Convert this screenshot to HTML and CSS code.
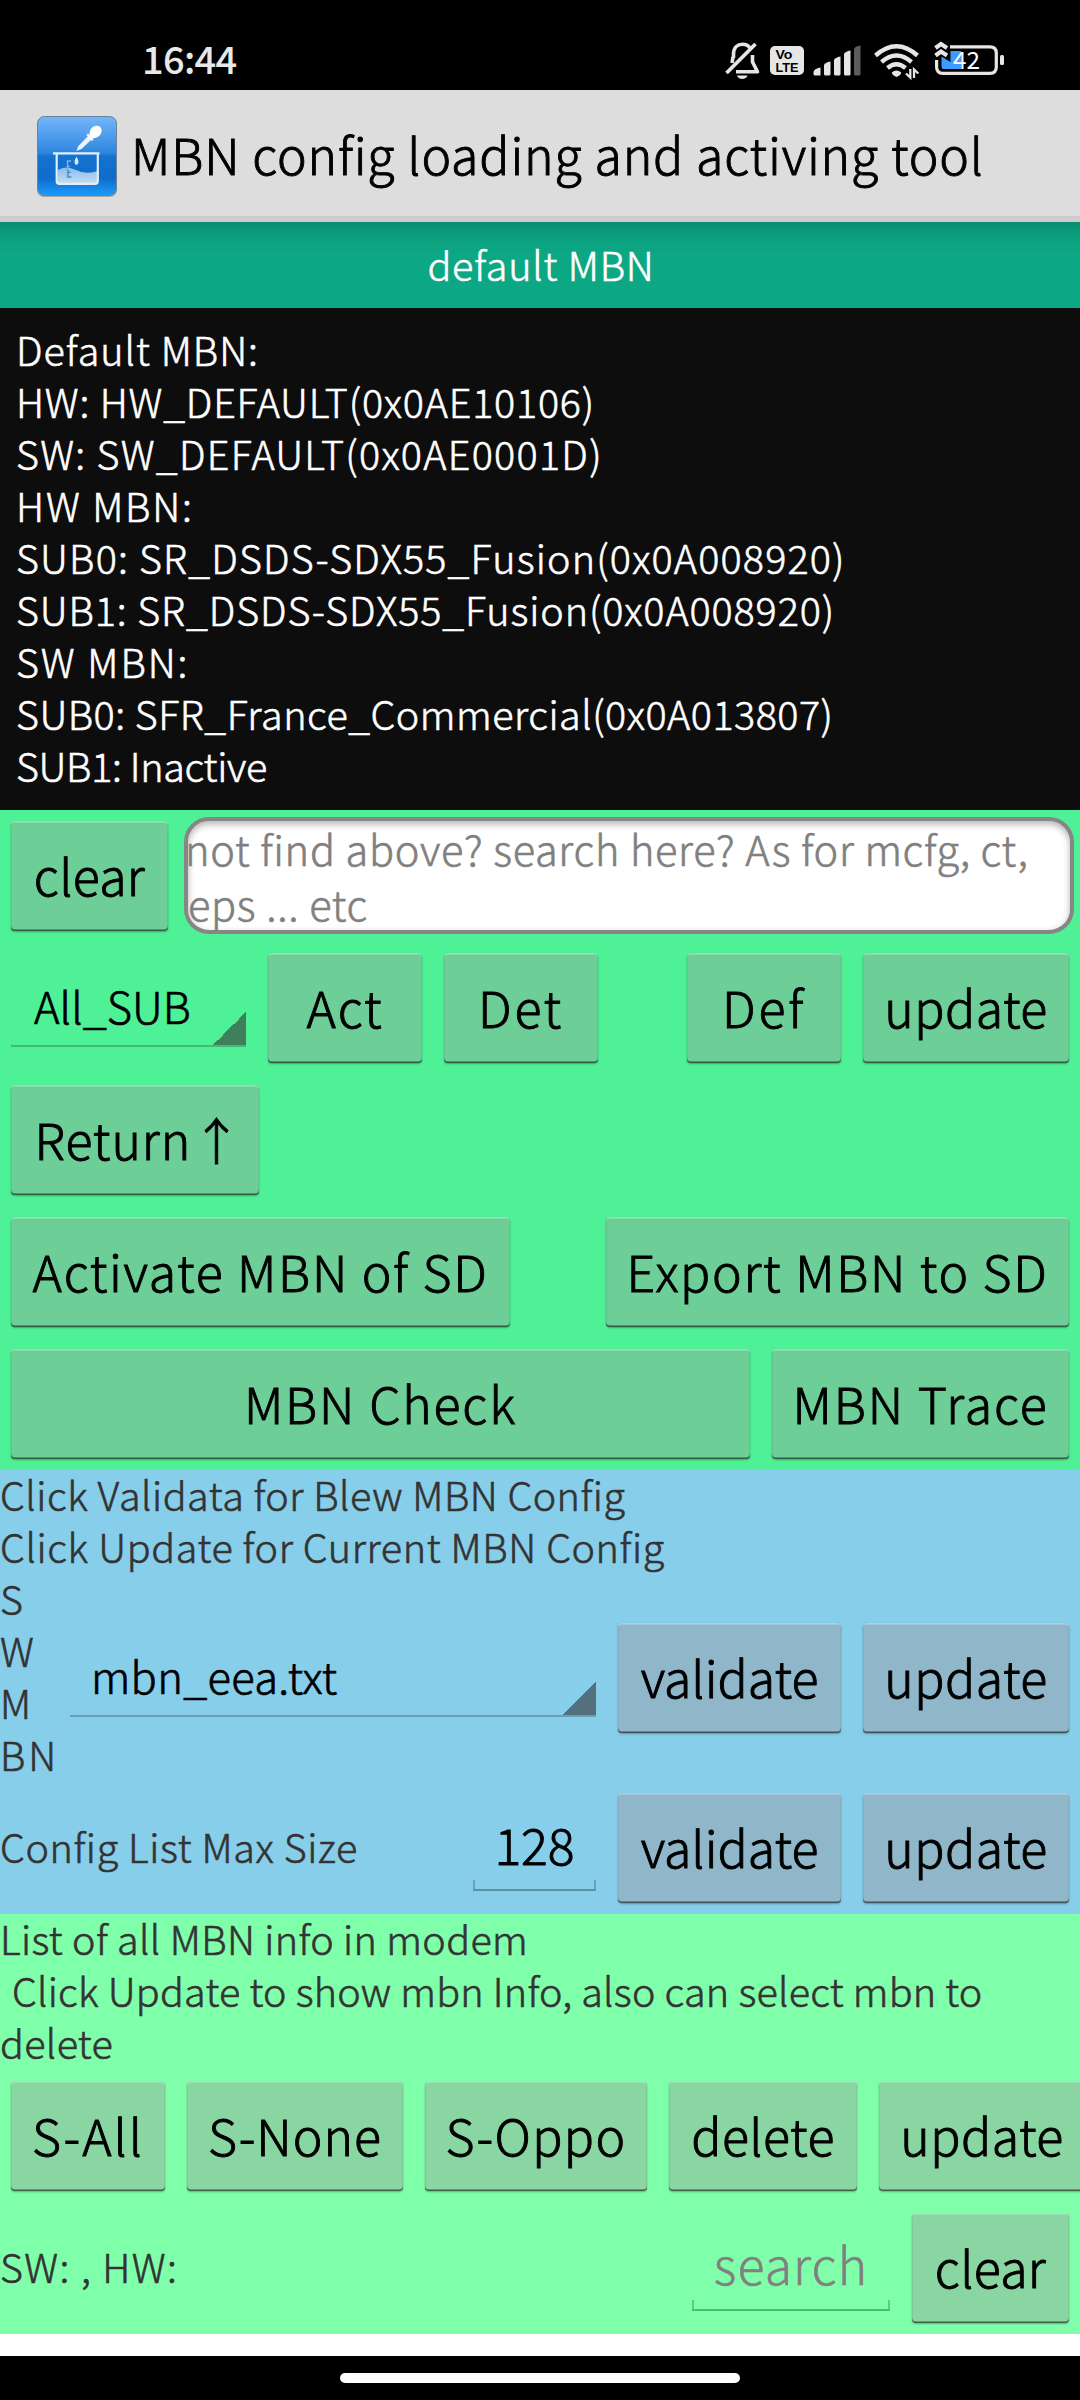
FILE: index.html
```html
<!DOCTYPE html>
<html lang="en">
<head>
<meta charset="utf-8">
<title>MBN config loading and activing tool</title>
<link rel="stylesheet" href="styles.css">
</head>
<body>
<div class="status">
  <span class="time">16:44</span>
  <svg class="status-icons" width="320" height="60" viewBox="0 0 320 60">
    <g fill="none" stroke="#e6e6e6" stroke-width="3.6" stroke-linejoin="round">
      <path d="M33.500 28V24.500C33.500 17 38 14.300 42.500 14.300C46 14.300 48.500 15.800 50 18"/>
      <path d="M52.500 25V32L57.500 41.700H36"/>
      <path d="M33 27L32 33"/>
      <path d="M26.500 43L55.500 14" stroke-width="3.800"/>
    </g>
    <path d="M37 45.500H47.500C46.500 50 38 50 37 45.500Z" fill="#e6e6e6"/>
    <rect x="70" y="16" width="34" height="29" rx="5" fill="#e6e6e6"/>
    <text class="volte"><tspan x="75.500" y="28.500" textLength="17" lengthAdjust="spacingAndGlyphs">Vo</tspan><tspan x="75.500" y="41.500" textLength="23" lengthAdjust="spacingAndGlyphs">LTE</tspan></text>
    <g fill="#e6e6e6">
      <path d="M113.500 42Q114 38.500 120.500 37.500V45.500H115Q113.500 45.500 113.500 44Z"/>
      <path d="M124 35Q125 32.500 130.500 31.500V44Q130.500 45.500 129 45.500H125.500Q124 45.500 124 44Z"/>
      <path d="M134 30Q135 27.500 140.500 26.500V44Q140.500 45.500 139 45.500H135.500Q134 45.500 134 44Z"/>
      <path d="M144 24Q145 21.500 150.500 20.500V44Q150.500 45.500 149 45.500H145.500Q144 45.500 144 44Z"/>
      <path d="M154 19Q155 16 160.500 15.500V44Q160.500 45.500 159 45.500H155.500Q154 45.500 154 44Z" fill="#5c5c5c"/>
    </g>
    <g fill="none" stroke="#e6e6e6" stroke-width="4.400">
      <path d="M175.500 25.500Q196.500 7 217.500 25.500"/>
      <path d="M181.500 32Q196.500 19 211.500 32"/>
      <path d="M187.500 38Q196.500 30.500 205.500 38"/>
    </g>
    <path d="M191.800 42.500Q196.500 38.500 201.300 42.500Q201 45 196.500 47Q192 45 191.800 42.500Z" fill="#e6e6e6"/>
    <path d="M210.300 39V47.500L206 43.500M214 48V39.500L218.300 43.500" fill="none" stroke="#e6e6e6" stroke-width="2.300"/>
    <path d="M250 16.800H290C294 16.800 296.300 19 296.300 23V37C296.300 41 294 43.300 290 43.300H243C239 43.300 236.600 41 236.600 37V30" fill="none" stroke="#e6e6e6" stroke-width="3.200"/>
    <rect x="300" y="25" width="4" height="10" rx="1.500" fill="#e6e6e6"/>
    <path d="M250.500 21H261V39H243.500Q241.500 39 241.500 36.500V26.500L250.500 32Z" fill="#3d9bff"/>
    <path d="M235.500 18L241 14L247 18M235.500 25.500L241 21.500L247 25.500" fill="none" stroke="#e6e6e6" stroke-width="4.200"/>
    <text x="253" y="39" class="battery" textLength="27" lengthAdjust="spacingAndGlyphs">42</text>
  </svg>
</div>

<header class="bar">
  <svg class="app-icon" width="100" height="100" viewBox="0 0 100 100">
    <defs>
      <linearGradient id="sky" x1="0" y1="0" x2="0" y2="1">
        <stop offset="0" stop-color="#74b6fb"/><stop offset=".46" stop-color="#2f86de"/><stop offset=".5" stop-color="#1672cf"/><stop offset=".78" stop-color="#0f6ccb"/><stop offset="1" stop-color="#1d9cfb"/>
      </linearGradient>
      <linearGradient id="water" x1="0" y1="0" x2="0" y2="1">
        <stop offset="0" stop-color="#8dbbe6"/><stop offset="1" stop-color="#c3ddf3"/>
      </linearGradient>
    </defs>
    <rect x="7" y="12.500" width="80" height="79.500" rx="7" fill="#000" opacity=".25"/>
    <rect x="7.500" y="11.500" width="79" height="79" rx="7" fill="url(#sky)" stroke="#6b8299"/>
    <path d="M28 65Q36 60 46 65T68 66V76Q68 78.500 65 78.500H30Q27.500 78.500 27.500 76Z" fill="url(#water)"/>
    <path d="M23 48.300H69.500M26.700 48.500V76Q26.700 78.800 29.500 78.800H65Q67.800 78.800 67.800 76V48.500" fill="none" stroke="#e2eefa" stroke-width="2.200"/>
    <path d="M41 56H37.500V72H41M37.500 61.500H40M37.500 66.500H40" fill="none" stroke="#7db3e6" stroke-width="1.400"/>
    <path d="M38 65V72H41.500M38 67.500H41" fill="none" stroke="#3f86cc" stroke-width="1.200"/>
    <path d="M46.500 51.500Q50.500 58.500 46.500 60Q42.500 58.500 46.500 51.500Z" fill="#d5e7f8"/>
    <path d="M46.500 46L48 41.500L58 31L61.500 34.500L51.500 44Z" fill="#eaf3fc"/>
    <path d="M58 28.500L63.500 34.500L62 36L56.500 30Z" fill="#fff"/>
    <path d="M59.500 30.500Q59 22 66 20.700Q71.500 20.500 71.700 26Q71 32.500 62.500 33.500Z" fill="#fff"/>
  </svg>
  <h1 class="title">MBN config loading and activing tool</h1>
</header>

<div class="tab"><span class="ls08">default MBN</span></div>

<section class="log">
  <p class="ls11">Default MBN:</p>
  <p class="ls08">HW: HW_DEFAULT(0x0AE10106)</p>
  <p class="ls13">SW: SW_DEFAULT(0x0AE0001D)</p>
  <p class="ls19">HW MBN:</p>
  <p class="ls12">SUB0: SR_DSDS-SDX55_Fusion(0x0A008920)</p>
  <p class="ls09">SUB1: SR_DSDS-SDX55_Fusion(0x0A008920)</p>
  <p class="ls20">SW MBN:</p>
  <p class="ls05">SUB0: SFR_France_Commercial(0x0A013807)</p>
  <p class="lsm03">SUB1: Inactive</p>
</section>

<section class="panel green">
  <div class="row">
    <button class="btn w157 ls03">clear</button>
    <div class="search-box">not find above? search here? As for mcfg, ct,<br>eps ... etc</div>
  </div>
  <div class="row">
    <div class="spinner sub">All_SUB</div>
    <button class="btn w154 ls20">Act</button>
    <button class="btn w154 ls28">Det</button>
    <button class="btn w154 ls28 push">Def</button>
    <button class="btn w206 ls05">update</button>
  </div>
  <div class="row">
    <button class="btn w248 ls11">Return<span class="arrow">↑</span></button>
  </div>
  <div class="row">
    <button class="btn w499 ls17">Activate MBN of SD</button>
    <button class="btn w463 ls17 push">Export MBN to SD</button>
  </div>
  <div class="row">
    <button class="btn grow ls19">MBN Check</button>
    <button class="btn w297 ls19">MBN Trace</button>
  </div>
</section>

<section class="panel blue">
  <div class="text">
    <p class="ls05">Click Validata for Blew MBN Config</p>
    <p class="ls06">Click Update for Current MBN Config</p>
  </div>
  <div class="row tall">
    <div class="text sw"><p>S</p><p>W</p><p>M</p><p class="ls28">BN</p></div>
    <div class="spinner file">mbn_eea.txt</div>
    <button class="btn w223">validate</button>
    <button class="btn w206 ls05">update</button>
  </div>
  <div class="row">
    <div class="text"><p class="ls06">Config List Max Size</p></div>
    <div class="field size push">128</div>
    <button class="btn w223">validate</button>
    <button class="btn w206 ls05">update</button>
  </div>
</section>

<section class="panel mint">
  <div class="text">
    <p class="ls03">List of all MBN info in modem</p>
    <p class="ls02 indent">Click Update to show mbn Info, also can select mbn to</p>
    <p class="ls03">delete</p>
  </div>
  <div class="row">
    <button class="btn w154 ls20">S-All</button>
    <button class="btn w216 ls11">S-None</button>
    <button class="btn w222 ls14">S-Oppo</button>
    <button class="btn w188 ls05">delete</button>
    <button class="btn w206 ls05">update</button>
  </div>
  <div class="row">
    <div class="text"><p class="ls14">SW: , HW:</p></div>
    <div class="field find push">search</div>
    <button class="btn w157 ls03">clear</button>
  </div>
</section>

<footer class="nav"><div class="pill"></div></footer>
</body>
</html>
```
FILE: styles.css
```css
* { box-sizing: border-box; }
body {
  margin: 0;
  width: 1080px;
  height: 2400px;
  overflow: hidden;
  display: flex;
  flex-direction: column;
  background: #fff;
  font-family: "Noto Sans CJK SC", sans-serif;
  font-weight: 300;
  font-size: 39.5px;
  line-height: 52px;
  color: #000;
  white-space: nowrap;
}
p, h1, .tab { margin: 0; font-weight: 300; -webkit-text-stroke: .6px currentColor; }

.status {
  height: 90px;
  background: #000;
  color: #e8e8e8;
  display: flex;
  padding: 30px 60px 0 142px;
  justify-content: space-between;
}
.time { font: 500 38px/56px "Noto Sans CJK SC", sans-serif; letter-spacing: -.7px; }
.volte { font: 700 12.5px "Liberation Sans", sans-serif; fill: #000; }
.battery { font: 400 24px "Noto Sans CJK SC", sans-serif; fill: #fff; }

.bar {
  height: 132px;
  background: #ddd;
  border-bottom: 6px solid #ccc;
  display: flex;
  align-items: center;
  padding-left: 30px;
}
.app-icon { margin-top: 4px; }
.title { font-size: 50px; letter-spacing: .84px; padding-left: 1px; -webkit-text-stroke-width: .9px; }

.tab {
  height: 86px;
  padding: 0 0 3px 2px;
  display: flex;
  align-items: center;
  justify-content: center;
  color: #fff;
  background: linear-gradient(#0b8c70, #0c9a7b 10px, #0ca381 20px, #0ca784 32px);
}
.log {
  height: 502px;
  padding: 15px 16px 0;
  background: #0d0d0d;
  color: #fff;
}

.panel { display: flex; flex-direction: column; }
.green { background: #4ff196; --btn: #6dce98; }
.blue { background: #87ceeb; --btn: #8fb7c9; }
.mint { background: #80ffaa; --btn: #8ad6a2; }
.text { margin: -2px 0 2px; color: #333; }
.indent { padding-left: 12px; }

.row {
  height: 132px;
  flex: none;
  display: flex;
  align-items: center;
  padding-right: 11px;
}
.tall { height: 208px; }
.push { margin-left: auto; }

.btn {
  flex: none;
  height: 110px;
  margin: 0 0 0 22px;
  padding: 0 0 5px;
  border: 0;
  border-radius: 4px;
  background: var(--btn);
  box-shadow: inset 0 1.500px 0 rgba(255,255,255,.35), inset 0 -1.500px 0 rgba(0,0,0,.55), inset 1px 0 0 rgba(0,0,0,.06), inset -1px 0 0 rgba(0,0,0,.06), 0 1px 2px rgba(0,0,0,.3);
  font: 300 50px/72px "Noto Sans CJK SC", sans-serif;
  color: #000;
  text-align: center;
  -webkit-text-stroke: .9px #000;
}
.btn.push { margin-left: auto; }
.btn:first-child, .spinner:first-child { margin-left: 11px; }
.grow { flex: 1; }
.w154 { width: 154px; } .w157 { width: 157px; } .w188 { width: 188px; }
.w206 { width: 206px; } .w216 { width: 216px; } .w222 { width: 222px; }
.w223 { width: 223px; } .w248 { width: 248px; } .w297 { width: 297px; }
.w463 { width: 463px; } .w499 { width: 499px; }
.arrow { display: inline-block; width: 50px; margin: 0 -6px 0 0; }

.search-box {
  flex: none;
  width: 890px;
  height: 117px;
  margin: -1px 0 0 16px;
  border: 4px solid #868686;
  border-radius: 25px;
  background: #fff;
  box-shadow: inset 0 3px 7px rgba(0,0,0,.3);
  color: #808080;
  font-size: 41.5px;
  line-height: 55px;
  letter-spacing: .7px;
  -webkit-text-stroke: .6px #808080;
}
/* the hint starts over the box's left edge */
.search-box { padding: 0; text-indent: -3px; }
.search-box::first-line { line-height: 53px; }

.spinner {
  height: 78px;
  border-bottom: 2px solid rgba(61,127,92,.5);
  padding-left: 23px;
  font-size: 43.5px;
  line-height: 73px;
  -webkit-text-stroke: .7px #000;
  background: linear-gradient(135deg, transparent 50%, #407f5b 50%) right bottom / 33px 33px no-repeat;
}
.sub { width: 235px; }
.file {
  width: 526px;
  letter-spacing: .3px;
  padding-left: 21px;
  border-color: rgba(84,112,125,.5);
  background-image: linear-gradient(135deg, transparent 50%, #54707d 50%);
}
.sw { width: 70px; }

.field {
  height: 86px;
  align-self: flex-start;
  margin-top: 23px;
  font-size: 50px;
  line-height: 77px;
  text-align: center;
  border-bottom: 2px solid rgba(0,0,0,.3);
  background:
    linear-gradient(rgba(0,0,0,.22), rgba(0,0,0,.22)) left bottom / 2px 9px no-repeat,
    linear-gradient(rgba(0,0,0,.22), rgba(0,0,0,.22)) right bottom / 2px 9px no-repeat;
  -webkit-text-stroke: .9px currentColor;
}
.size { width: 123px; }
.find { width: 198px; color: #808080; letter-spacing: 1.1px; border-color: rgba(0,90,40,.4); -webkit-text-stroke-width: .6px; }

.lsm03 { letter-spacing: -.33px; } .ls02 { letter-spacing: .22px; }
.ls03 { letter-spacing: .34px; }
.ls05 { letter-spacing: .5px; } .ls06 { letter-spacing: .62px; }
.ls08 { letter-spacing: .79px; } .ls09 { letter-spacing: .9px; }
.ls11 { letter-spacing: 1px; } .ls12 { letter-spacing: 1.18px; }
.ls13 { letter-spacing: 1.28px; } .ls14 { letter-spacing: 1.4px; }
.ls17 { letter-spacing: 1.7px; }
.ls19 { letter-spacing: 1.85px; } .ls20 { letter-spacing: 1.95px; }
.ls28 { letter-spacing: 2.8px; }

.nav {
  height: 44px;
  margin-top: auto;
  background: #000;
  display: flex;
  justify-content: center;
  padding-top: 17px;
}
.pill { width: 400px; height: 10px; border-radius: 5px; background: #fff; }
```
